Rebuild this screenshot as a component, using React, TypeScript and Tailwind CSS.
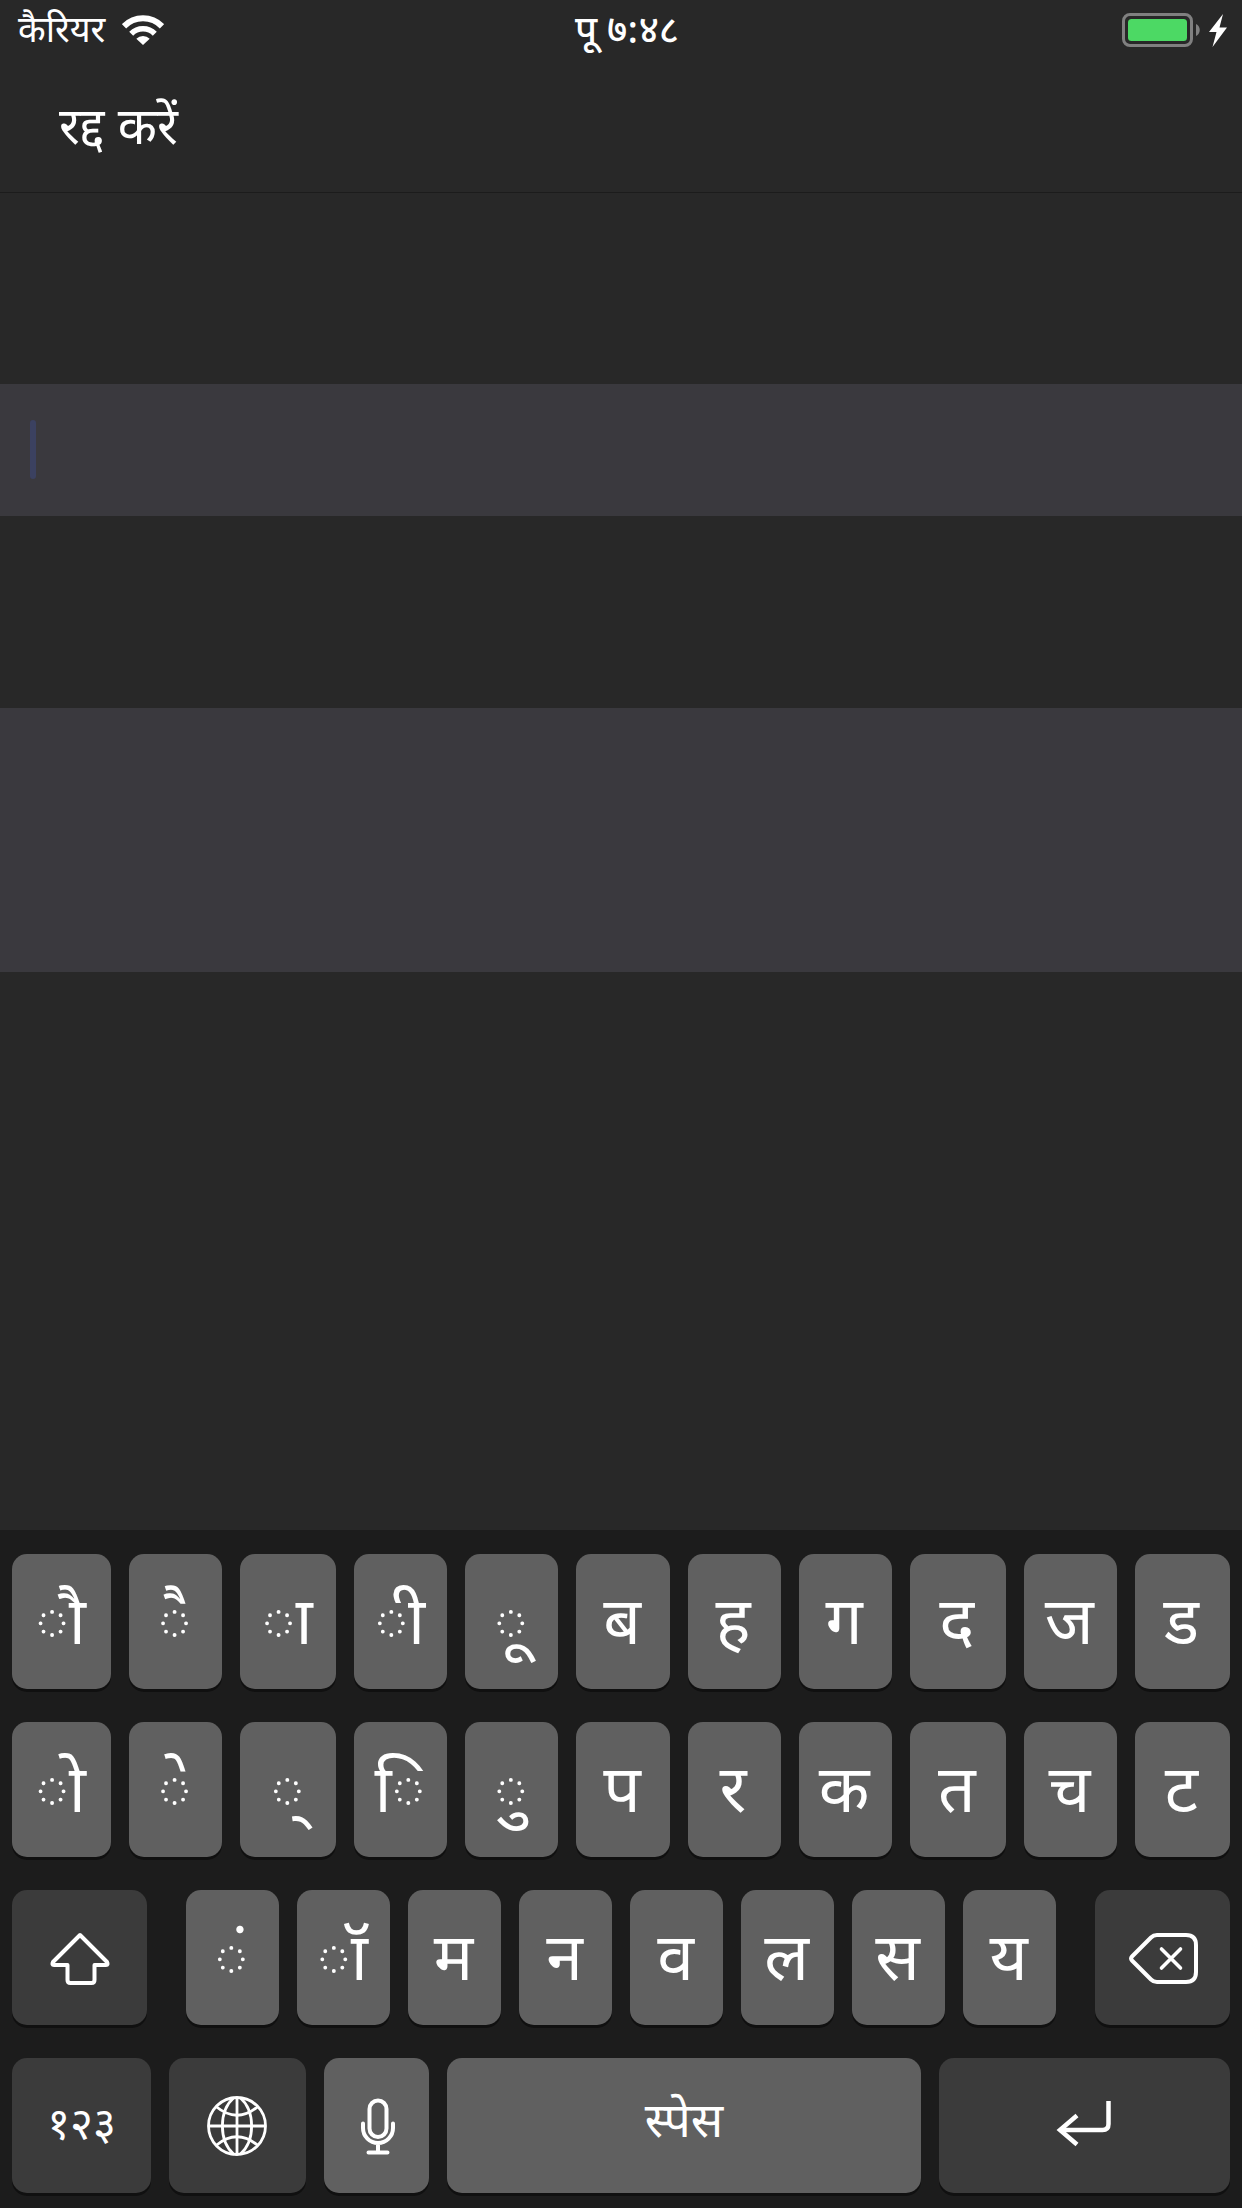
import type { ReactNode } from "react";

const ROW_ONE = ["ौ", "ै", "ा", "ी", "ू", "ब", "ह", "ग", "द", "ज", "ड"];
const ROW_TWO = ["ो", "े", "्", "ि", "ु", "प", "र", "क", "त", "च", "ट"];
const ROW_THREE = ["ं", "ॉ", "म", "न", "व", "ल", "स", "य"];

const CONTENT_STYLES = {
  letter: "pt-3 pr-0.5 text-[66px]",
  word: "text-[48px]",
  digits: "pt-1.5 text-[44px]",
  icon: "pt-0.5 pl-0.5",
  wideIcon: "pr-0.5",
};

function Key({ children, label, dark = false, kind = "letter" }: { children: ReactNode; label?: string; dark?: boolean; kind?: keyof typeof CONTENT_STYLES }) {
  return (
    <button
      type="button"
      aria-label={label}
      className={`flex h-[135px] min-w-0 items-center justify-center rounded-[15px] shadow-[0_3px_0_#101010] ${
        dark ? "bg-[#3b3b3b]" : "bg-[#606060]"
      } ${CONTENT_STYLES[kind]} leading-none`}
    >
      {children}
    </button>
  );
}

function WifiIcon() {
  return (
    <svg width="42" height="30" viewBox="0 0 42 30" fill="none" aria-hidden="true">
      <path d="M2 11.3 A26.5 26.5 0 0 1 40 11.3" stroke="#fff" strokeWidth="6" />
      <path d="M9.2 18.7 A16.6 16.6 0 0 1 32.8 18.7" stroke="#fff" strokeWidth="5.6" />
      <path d="M14.3 23.8 A9.5 9.5 0 0 1 27.7 23.8 L21 30 Z" fill="#fff" />
    </svg>
  );
}

function BatteryIcon() {
  return (
    <svg width="106" height="36" viewBox="0 0 106 36" fill="none" role="img" aria-label="बैटरी चार्ज हो रही है">
      <rect x="1.5" y="2.5" width="68" height="31" rx="6.5" stroke="#808080" strokeWidth="3" />
      <rect x="6" y="7" width="59" height="22" rx="3.5" fill="#4cd964" />
      <path d="M74 12 C79 14 79 22 74 24 Z" fill="#808080" />
      <path d="M101 2 L87 20 H94.500 L90.500 35 L105 15.500 H97.500 Z" fill="#fff" />
    </svg>
  );
}

function ShiftIcon() {
  return (
    <svg width="60" height="54" viewBox="0 0 60 54" fill="none" stroke="#fff" strokeWidth="4" strokeLinejoin="round" aria-hidden="true">
      <path d="M30 3 L57 30 Q58.500 33 56 33 H44.500 V48 Q44.500 51 41.500 51 H20.500 Q17.500 51 17.500 48 V33 H4 Q1.500 33 3 30 Z" />
    </svg>
  );
}

function DeleteIcon() {
  return (
    <svg width="69" height="51" viewBox="0 0 69 51" fill="none" stroke="#fff" strokeWidth="4" strokeLinejoin="round" strokeLinecap="round" aria-hidden="true">
      <path d="M22 4.500 Q24.500 2 28 2 H57 Q67 2 67 12 V39 Q67 49 57 49 H28 Q24.500 49 22 46.500 L3 27.500 Q1 25.500 3 23.500 Z" />
      <path d="M32.500 16 L51.500 35 M51.500 16 L32.500 35" strokeWidth="3.600" />
    </svg>
  );
}

function GlobeIcon() {
  return (
    <svg width="60" height="60" viewBox="0 0 60 60" fill="none" stroke="#fff" strokeWidth="2.800" aria-hidden="true">
      <circle cx="30" cy="30" r="28.500" />
      <path d="M30 1 V59 M1 30 H59" />
      <path d="M27 1.500 C11.500 15 11.500 45 27 58.500 M33 1.500 C48.500 15 48.500 45 33 58.500" />
      <path d="M9 10.500 Q30 28 51 10.500 M9 49.500 Q30 32 51 49.500" />
    </svg>
  );
}

function MicIcon() {
  return (
    <svg width="36" height="57" viewBox="0 0 36 57" fill="none" stroke="#fff" strokeWidth="4" strokeLinecap="round" aria-hidden="true">
      <rect x="9.500" y="2.500" width="17" height="36.500" rx="8.500" />
      <path d="M3 25.500 V30 A15 15 0 0 0 33 30 V25.500 M18 45 V54 M8.500 54.500 H27.500" />
    </svg>
  );
}

function ReturnIcon() {
  return (
    <svg width="56" height="52" viewBox="0 0 56 52" fill="none" stroke="#fff" strokeWidth="4.500" aria-hidden="true">
      <path d="M52.500 1 V24 Q52.500 30 46.500 30 H4" />
      <path d="M21 15.500 L4 30 L21 44.500" />
    </svg>
  );
}

export default function App() {
  return (
    <div className="flex min-h-screen flex-col bg-[#282828] font-['Noto_Sans_Devanagari','Noto_Sans',sans-serif] text-white">
      <header className="border-b border-[#1c1c1c]">
        <div className="grid h-[60px] grid-cols-3 items-center pr-3.5 pl-[18px]">
          <div className="flex items-center gap-[17px] leading-none">
            <span className="pt-2 text-[36px]">कैरियर</span>
            <WifiIcon />
          </div>
          <div className="pt-2 pl-2 text-center text-[38px] leading-none font-medium">पू ७:४८</div>
          <div className="flex justify-end">
            <BatteryIcon />
          </div>
        </div>
        <div className="flex h-[132px] items-center px-[59px] pt-2.5">
          <button type="button" className="text-[51px] leading-none">रद्द करें</button>
        </div>
      </header>

      <main className="flex-1 pt-[191px]">
        <div className="relative h-[132px] bg-[#3a393e]">
          <input
            type="text"
            aria-label="शीर्षक"
            className="h-full w-full bg-transparent px-[30px] text-[51px] caret-[#3b4160] outline-none"
          />
          <span className="absolute top-9 left-[30px] h-[59px] w-1.5 rounded-full bg-[#3b4160]" />
        </div>
        <textarea
          aria-label="विवरण"
          className="mt-48 block h-[264px] w-full resize-none bg-[#3a393e] px-[30px] py-6 text-[51px] outline-none"
        />
      </main>

      <section aria-label="कीबोर्ड" className="flex flex-col gap-[33px] bg-[#1c1c1c] px-3 pt-6 pb-[15px]">
        {[ROW_ONE, ROW_TWO].map((row) => (
          <div key={row[0]} className="grid grid-cols-[99fr_93fr_96fr_93fr_93fr_93fr_93fr_93fr_96fr_93fr_95fr] gap-[18px]">
            {row.map((char) => (
              <Key key={char}>{char}</Key>
            ))}
          </div>
        ))}
        <div className="grid grid-cols-[135fr_871fr_135fr] gap-[39px]">
          <Key dark kind="icon" label="शिफ़्ट">
            <ShiftIcon />
          </Key>
          <div className="grid grid-cols-8 gap-[18px]">
            {ROW_THREE.map((char) => (
              <Key key={char}>{char}</Key>
            ))}
          </div>
          <Key dark kind="icon" label="मिटाएँ">
            <DeleteIcon />
          </Key>
        </div>
        <div className="grid grid-cols-[139fr_137fr_105fr_474fr_291fr] gap-[18px]">
          <Key dark kind="digits">१२३</Key>
          <Key dark kind="wideIcon" label="अगला कीबोर्ड">
            <GlobeIcon />
          </Key>
          <Key kind="icon" label="श्रुतलेख">
            <MicIcon />
          </Key>
          <Key kind="word">स्पेस</Key>
          <Key dark kind="wideIcon" label="रिटर्न">
            <ReturnIcon />
          </Key>
        </div>
      </section>
    </div>
  );
}
